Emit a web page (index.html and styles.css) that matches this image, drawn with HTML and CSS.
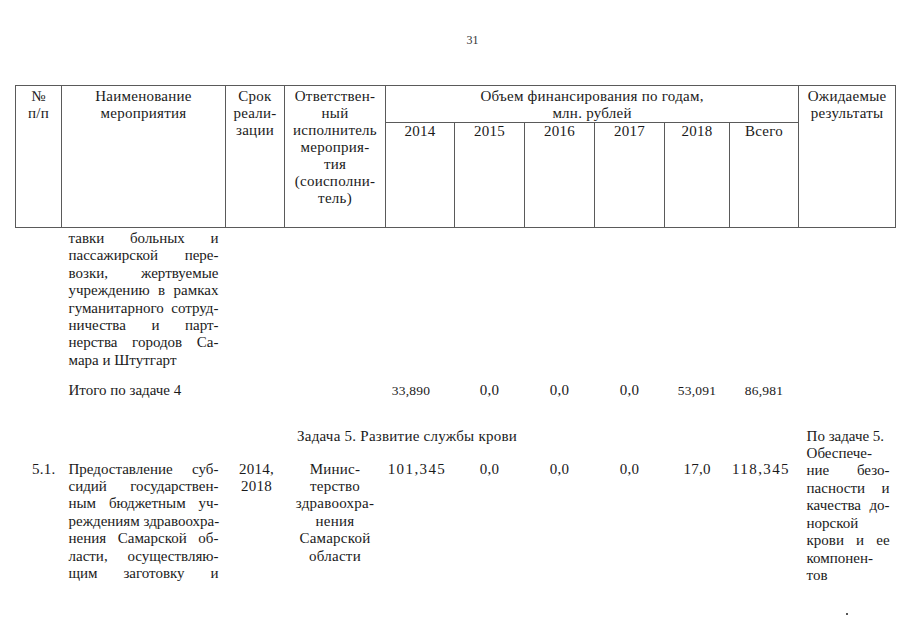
FILE: index.html
```html
<!DOCTYPE html>
<html lang="ru">
<head>
<meta charset="utf-8">
<title>31</title>
<link rel="stylesheet" href="styles.css">
</head>
<body>
<div class="page">
  <div class="page-num">31</div>
  <table class="plan">
    <colgroup>
      <col class="c-num"><col class="c-name"><col class="c-term"><col class="c-resp">
      <col class="c-y14"><col class="c-y"><col class="c-y"><col class="c-y"><col class="c-y18"><col class="c-all">
      <col class="c-res">
    </colgroup>
    <thead>
      <tr class="h1">
        <th rowspan="2">№<br>п/п</th>
        <th rowspan="2">Наименование<br>мероприятия</th>
        <th rowspan="2" class="term-h">Срок<br>реали-<br>зации</th>
        <th rowspan="2">Ответствен-<br>ный<br>исполнитель<br>мероприя-<br>тия<br>(соисполни-<br>тель)</th>
        <th colspan="6">Объем финансирования по годам,<br>млн. рублей</th>
        <th rowspan="2">Ожидаемые<br>результаты</th>
      </tr>
      <tr class="h2">
        <th>2014</th><th>2015</th><th>2016</th><th>2017</th><th>2018</th><th>Всего</th>
      </tr>
    </thead>
    <tbody>
      <tr class="r-cont">
        <td></td>
        <td class="name">
          <div class="j">тавки больных и</div>
          <div class="j">пассажирской пере-</div>
          <div class="j">возки, жертвуемые</div>
          <div class="j">учреждению в рамках</div>
          <div class="j">гуманитарного сотруд-</div>
          <div class="j">ничества и парт-</div>
          <div class="j">нерства городов Са-</div>
          <div class="l">мара и Штутгарт</div>
        </td>
        <td></td><td></td><td></td><td></td><td></td><td></td><td></td><td></td><td></td>
      </tr>
      <tr class="r-total">
        <td></td>
        <td class="name">Итого по задаче 4</td>
        <td></td><td></td>
        <td class="n sm first">33,890</td>
        <td class="n">0,0</td>
        <td class="n">0,0</td>
        <td class="n">0,0</td>
        <td class="n sm">53,091</td>
        <td class="n sm">86,981</td>
        <td></td>
      </tr>
      <tr class="r-task">
        <td colspan="10" class="task">Задача 5. Развитие службы крови</td>
        <td rowspan="2" class="res">
          <div class="l">По задаче 5.</div>
          <div class="l">Обеспече-</div>
          <div class="j">ние безо-</div>
          <div class="j">пасности и</div>
          <div class="j">качества до-</div>
          <div class="l">норской</div>
          <div class="j">крови и ее</div>
          <div class="l">компонен-</div>
          <div class="l">тов</div>
        </td>
      </tr>
      <tr class="r-item">
        <td class="num">5.1.</td>
        <td class="name">
          <div class="j">Предоставление суб-</div>
          <div class="j">сидий государствен-</div>
          <div class="j">ным бюджетным уч-</div>
          <div class="j">реждениям здравоохра-</div>
          <div class="j">нения Самарской об-</div>
          <div class="j">ласти, осуществляю-</div>
          <div class="j">щим заготовку и</div>
        </td>
        <td class="term">2014,<br>2018</td>
        <td class="resp">Минис-<br>терство<br>здравоохра-<br>нения<br>Самарской<br>области</td>
        <td class="n wide">101,345</td>
        <td class="n">0,0</td>
        <td class="n">0,0</td>
        <td class="n">0,0</td>
        <td class="n">17,0</td>
        <td class="n wide">118,345</td>
      </tr>
    </tbody>
  </table>
  <span class="speck"></span>
</div>
</body>
</html>
```

FILE: styles.css
```css
html, body {
  margin: 0;
  padding: 0;
  background: #fff;
}

body {
  color: #1a1a1a;
  font-family: "Liberation Serif", "Times New Roman", serif;
  font-size: 15px;
}

.page {
  position: relative;
  width: 905px;
  height: 640px;
  padding: 33px 0 0 15px;
  box-sizing: border-box;
  overflow: hidden;
}

.page-num {
  height: 52px;
  line-height: 14px;
  font-size: 12px;
  text-align: center;
  padding-left: 35px;
  box-sizing: border-box;
  width: 880px;
  color: #333;
}

.plan {
  border-collapse: collapse;
  table-layout: fixed;
  width: 880px;
  letter-spacing: 0.25px;
}

.c-num { width: 46px; }
.c-name { width: 164px; }
.c-term { width: 59px; }
.c-resp { width: 101px; }
.c-y14 { width: 69px; }
.c-y { width: 70px; }
.c-y18 { width: 65px; }
.c-all { width: 69px; }
.c-res { width: 97px; }

.plan th {
  border: 1px solid #5a5a5a;
  font-weight: normal;
  vertical-align: top;
  text-align: center;
  padding: 2px 0 0;
  line-height: 17px;
  font-size: 15px;
  white-space: nowrap;
}

.plan .h1 { height: 35px; }
.plan .h2 { height: 105px; }
.plan .h2 th { padding-top: 0; }

.plan td {
  vertical-align: top;
  padding: 0;
  line-height: 17.4px;
  font-size: 15px;
}

.plan td.name {
  padding-left: 7px;
  padding-right: 7px;
  letter-spacing: 0;
}

.j {
  white-space: nowrap;
  text-align: justify;
  text-align-last: justify;
}

.l {
  white-space: nowrap;
}

.r-cont td { padding-top: 2px; }
.r-total td { padding-top: 13px; }
.r-task td { padding-top: 28px; }
.r-item td { padding-top: 15px; }

.plan td.n {
  text-align: center;
  white-space: nowrap;
}

.plan td.sm {
  font-size: 13.5px;
}

.plan td.first {
  padding-right: 18px;
}

.plan td.wide {
  letter-spacing: 1.4px;
  padding-right: 6px;
}

.plan td.num {
  text-align: right;
  padding-right: 6px;
}

.plan td.term {
  text-align: center;
  padding-left: 3px;
}

.plan td.resp {
  text-align: center;
  white-space: nowrap;
}

.plan td.task {
  text-align: center;
  white-space: nowrap;
}

.plan td.res {
  padding-left: 8px;
  padding-right: 6px;
  letter-spacing: 0;
}

.speck {
  position: absolute;
  left: 846px;
  top: 613px;
  width: 2px;
  height: 2px;
  background: #555;
}
```
